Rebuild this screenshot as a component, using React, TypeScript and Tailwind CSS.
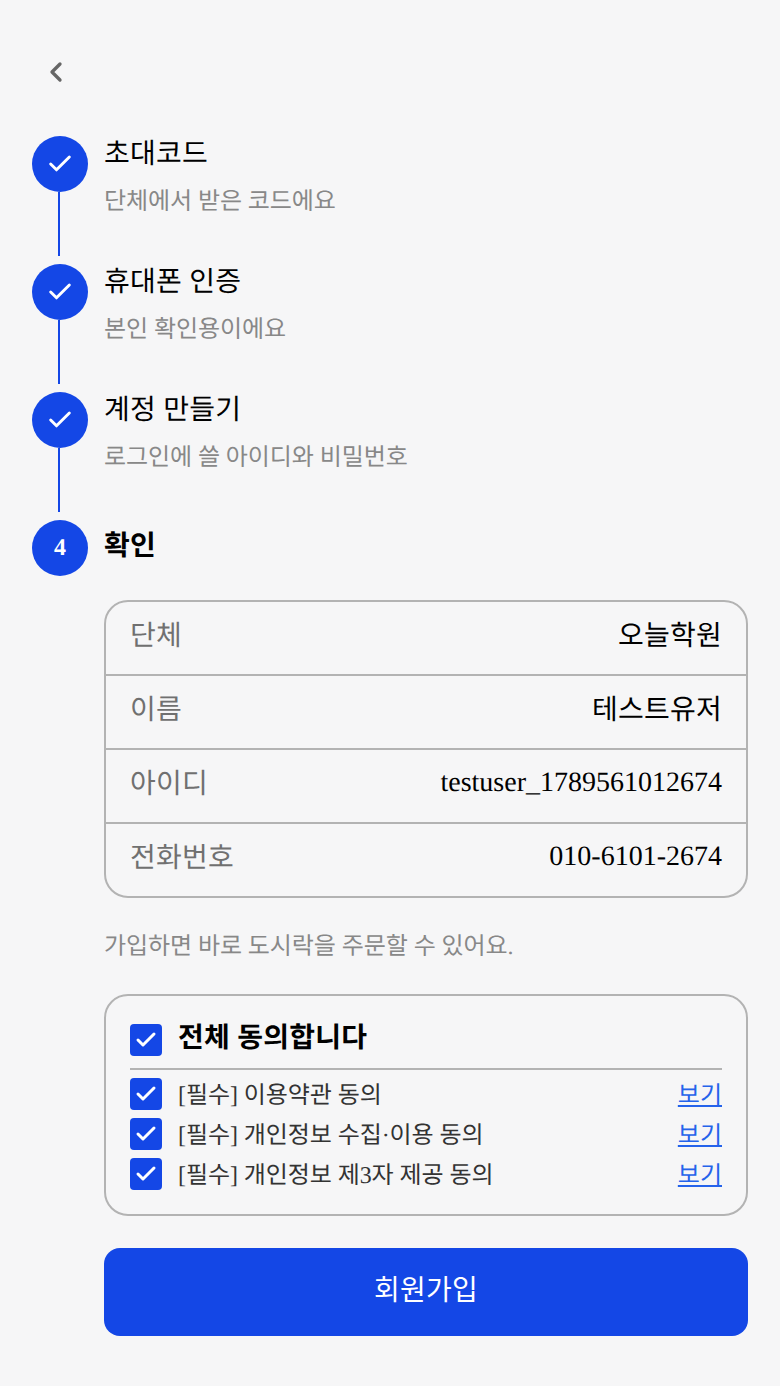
import React from 'react';
import { Check, ChevronLeft } from 'lucide-react';

const fontStack = "font-['Liberation_Serif','Noto_Sans_CJK_KR',serif] [text-rendering:geometricPrecision]";

const steps = [
    { title: '초대코드', desc: '단체에서 받은 코드에요' },
    { title: '휴대폰 인증', desc: '본인 확인용이에요' },
    { title: '계정 만들기', desc: '로그인에 쓸 아이디와 비밀번호' },
];

const summary = [
    { label: '단체', value: '오늘학원', hangul: true },
    { label: '이름', value: '테스트유저', hangul: true },
    { label: '아이디', value: 'testuser_1789561012674', hangul: false },
    { label: '전화번호', value: '010-6101-2674', hangul: false },
];

const terms = ['[필수] 이용약관 동의', '[필수] 개인정보 수집·이용 동의', '[필수] 개인정보 제3자 제공 동의'];

const CheckBox = () => (
    <span className="flex h-8 w-8 shrink-0 items-center justify-center rounded-[4px] bg-[#1447e6] text-white">
        <Check size={24} strokeWidth={3} />
    </span>
);

const App: React.FC = () => {
    return (
        <div className={`${fontStack} min-h-[1386px] bg-[#f6f6f7] px-8 pt-12 pb-[50px]`}>
            <button type="button" className="flex h-12 w-12 items-center justify-start pl-[8px] text-[#666666]">
                <ChevronLeft size={32} strokeWidth={2.5} />
            </button>

            <div className="mt-10">
                {steps.map(step => (
                    <div key={step.title} className="flex h-32 gap-4">
                        <div className="flex w-14 shrink-0 flex-col">
                            <div className="flex h-14 w-14 items-center justify-center rounded-full bg-[#1447e6] text-white">
                                <Check size={28} strokeWidth={2.5} />
                            </div>
                            <div className="ml-[26px] h-16 w-[2px] bg-[#1447e6]" />
                        </div>
                        <div className="pt-[3px]">
                            <div className="text-[28px] leading-[32px] tracking-[0.24px] text-black">{step.title}</div>
                            <div className="mt-[15px] text-[24px] leading-[32px] tracking-[-0.08px] text-[#888888]">{step.desc}</div>
                        </div>
                    </div>
                ))}

                <div className="flex gap-4">
                    <div className="flex h-14 w-14 shrink-0 items-center justify-center rounded-full bg-[#1447e6] text-[24px] font-bold text-white">
                        4
                    </div>
                    <div className="min-w-0 flex-1">
                        <div className="text-[28px] font-bold leading-[54px] tracking-[0.24px] text-black">확인</div>

                        <div className="mt-[26px] overflow-hidden rounded-3xl border-2 border-[#b3b3b3]">
                            {summary.map((row, i) => (
                                <div
                                    key={row.label}
                                    className={`flex items-center justify-between px-6 pb-[2px] text-[28px] ${i > 0 ? 'h-[74px] border-t-2 border-[#b3b3b3]' : 'h-[72px]'}`}
                                >
                                    <span className="tracking-[0.24px] text-[#707070]">{row.label}</span>
                                    <span className={row.hangul ? 'tracking-[0.24px] text-black' : 'pb-1 text-black'}>{row.value}</span>
                                </div>
                            ))}
                        </div>

                        <p className="mt-[33px] text-[24px] leading-[32px] tracking-[-0.08px] text-[#888888]">가입하면 바로 도시락을 주문할 수 있어요.</p>

                        <div className="mt-[31px] rounded-3xl border-2 border-[#b3b3b3] px-6 pt-7 pb-6">
                            <div className="flex items-center gap-4 border-b-2 border-[#b3b3b3] pb-3">
                                <CheckBox />
                                <span className="pb-[2px] text-[28px] font-bold leading-[30px] tracking-[0.24px] text-black">전체 동의합니다</span>
                            </div>
                            <div className="mt-2 flex flex-col gap-2">
                                {terms.map(term => (
                                    <div key={term} className="flex h-8 items-center gap-4">
                                        <CheckBox />
                                        <span className="flex-1 pt-1 text-[24px] leading-8 tracking-[-0.08px] text-[#333333]">{term}</span>
                                        <a href="#" className="pt-1 text-[24px] leading-8 text-[#2563eb] underline">보기</a>
                                    </div>
                                ))}
                            </div>
                        </div>

                        <button type="button" className="mt-8 h-[88px] w-full rounded-2xl bg-[#1447e6] pb-[2px] text-[28px] tracking-[0.24px] text-white">
                            회원가입
                        </button>
                    </div>
                </div>
            </div>
        </div>
    );
};

export default App;
